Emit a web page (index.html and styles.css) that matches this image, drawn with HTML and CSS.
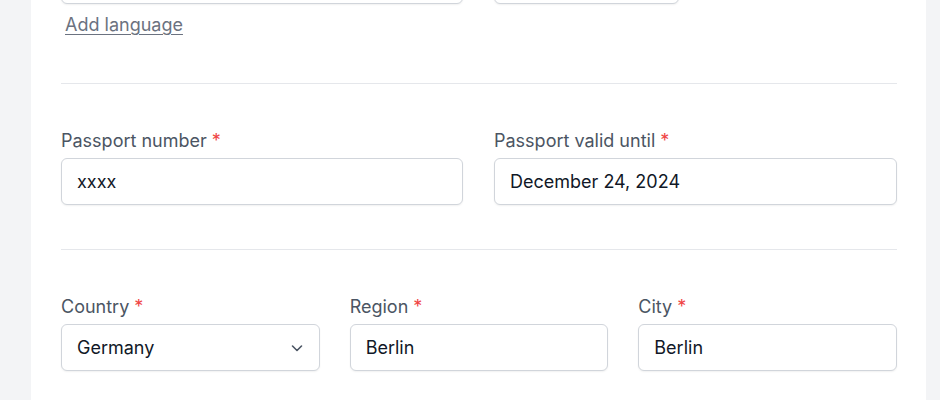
FILE: index.html
```html
<!DOCTYPE html>
<html lang="en">
<head>
<meta charset="utf-8">
<title>Profile form</title>
<link rel="stylesheet" href="styles.css">
</head>
<body>
<div class="page">
  <div class="card">
    <section class="section section-top">
      <div class="lang-row">
        <div class="input lang-input"></div>
        <div class="input level-input"></div>
      </div>
      <a class="add-link" href="#">Add language</a>
    </section>
    <section class="section">
      <div class="grid grid-2">
        <div class="field">
          <label class="label">Passport number <span class="req">*</span></label>
          <div class="input">xxxx</div>
        </div>
        <div class="field">
          <label class="label">Passport valid until <span class="req">*</span></label>
          <div class="input">December 24, 2024</div>
        </div>
      </div>
    </section>
    <section class="section">
      <div class="grid grid-3">
        <div class="field">
          <label class="label">Country <span class="req">*</span></label>
          <div class="input select">
            <span>Germany</span>
            <svg class="chevron" width="14" height="14" viewBox="0 0 14 14" fill="none" stroke="#4b5563" stroke-width="1.6" stroke-linecap="round" stroke-linejoin="round"><path d="M2.5 5l4.5 4.5L11.5 5"/></svg>
          </div>
        </div>
        <div class="field">
          <label class="label">Region <span class="req">*</span></label>
          <div class="input">Berlin</div>
        </div>
        <div class="field">
          <label class="label">City <span class="req">*</span></label>
          <div class="input">Berlin</div>
        </div>
      </div>
    </section>
  </div>
</div>
</body>
</html>
```
FILE: styles.css
```css
* { box-sizing: border-box; }
html, body { margin: 0; padding: 0; }
body {
  background: #f3f4f6;
  font-family: "Inter", "Liberation Sans", sans-serif;
  color: #1f2937;
  overflow: hidden;
}
.page {
  padding-left: 31px;
  width: 926px;
}
.card {
  background: #ffffff;
  padding: 0 29px 0 30px;
  margin-top: -43px;
  height: 500px;
}
.section {
  padding: 44px 0;
  border-bottom: 1px solid #e5e7eb;
}
.section:last-child { border-bottom: none; }
.section-top {
  padding: 0 0 46px 0;
}
.lang-row {
  display: flex;
  gap: 31px;
}
.lang-input { width: 402px; }
.level-input { width: 185px; }
.add-link {
  display: inline-block;
  margin-top: 9px;
  margin-left: 4px;
  font-size: 18px;
  line-height: 24px;
  color: #6b7280;
  text-decoration: underline;
  text-underline-offset: 3px;
}
.grid { display: grid; }
.grid-2 { grid-template-columns: 402px 1fr; column-gap: 31px; }
.grid-3 { grid-template-columns: 1fr 1fr 1fr; column-gap: 30px; }
.field { display: flex; flex-direction: column; gap: 4px; }
.label {
  font-size: 18px;
  line-height: 26px;
  color: #4b5563;
}
.req { color: #ef4444; }
.input {
  height: 47px;
  border: 1px solid #d1d5db;
  border-radius: 6px;
  box-shadow: 0 1px 2px rgba(0,0,0,0.06);
  padding: 0 15px;
  display: flex;
  align-items: center;
  font-size: 18px;
  color: #111827;
  background: #fff;
}
.select { justify-content: space-between; }
```
